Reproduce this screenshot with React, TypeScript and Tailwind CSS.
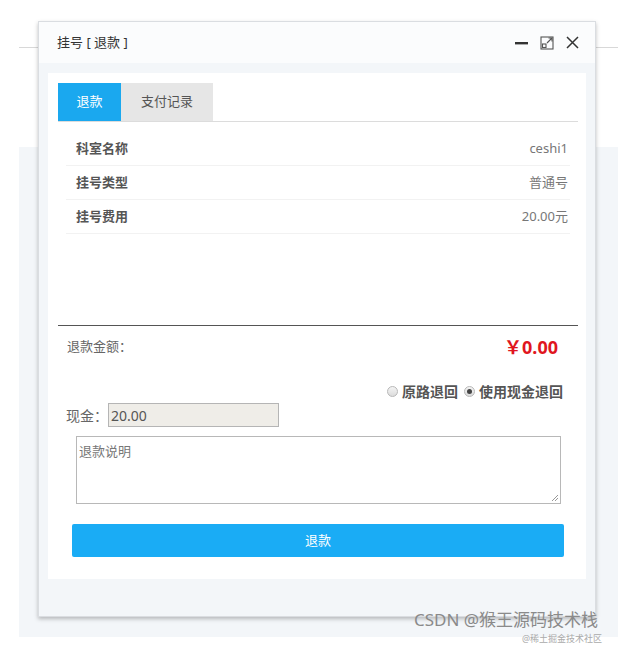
import React from "react";

const font = { fontFamily: '"Noto Sans", "Noto Sans CJK SC", sans-serif' };

const rows = [
  { label: "科室名称", value: "ceshi1" },
  { label: "挂号类型", value: "普通号" },
  { label: "挂号费用", value: "20.00元" },
];

const Radio = ({ checked }: { checked?: boolean }) => (
  <span className="inline-flex items-center justify-center w-[11px] h-[11px] rounded-full border border-[#b8b8b8] bg-gradient-to-b from-[#f4f4f4] to-[#dcdcdc]">
    {checked && <span className="w-[5px] h-[5px] rounded-full bg-[#444]" />}
  </span>
);

export default function App() {
  return (
    <div
      className="relative w-[641px] h-[645px] bg-white overflow-hidden text-[13px] text-[#555]"
      style={font}
    >
      {/* page behind the dialog */}
      <div className="pt-[47px] pl-[19px] pr-[23px]">
        <div className="border-t border-[#d8d8d8]" />
        <div className="mt-[99px] h-[490px] bg-[#f3f6f9]" />
      </div>

      {/* dialog */}
      <div className="absolute left-[38px] top-[21px] w-[558px] h-[596px] border border-[#dadde1] bg-[#f3f6f9] shadow-[0_2px_4px_rgba(0,0,0,0.25)] flex flex-col">
        <div className="h-[41px] flex items-center justify-between pl-[18px] pr-[16px] bg-[#fbfcfd] text-[13px] text-[#333]">
          <span>挂号 [ 退款 ]</span>
          <div className="flex items-center gap-[12px] text-[#333]">
            <svg width="13" height="14" viewBox="0 0 13 14">
              <rect x="0" y="6" width="13" height="2.4" fill="#333" />
            </svg>
            <svg width="14" height="14" viewBox="0 0 14 14" fill="none" stroke="#555" strokeWidth="1.1">
              <rect x="1" y="1" width="12" height="12" />
              <rect x="2.5" y="8" width="3.5" height="3.5" />
              <path d="M7 7 L12 2 M8.5 2 H12 V5.5" />
            </svg>
            <svg width="13" height="13" viewBox="0 0 13 13" stroke="#333" strokeWidth="1.5">
              <path d="M1 1 L12 12 M12 1 L1 12" />
            </svg>
          </div>
        </div>

        <div className="flex-1 pt-[10px] pl-[9px] pr-[9px] pb-[37px]">
          <div className="h-full bg-white pt-[10px] pl-[10px] pr-[8px] flex flex-col">
            {/* tabs */}
            <div className="flex border-b border-[#dcdcdc] h-[39px]">
              <div className="w-[63px] bg-[#1aa8ef] text-white flex items-center justify-center">退款</div>
              <div className="w-[92px] bg-[#e6e6e6] text-[#555] flex items-center justify-center">支付记录</div>
            </div>

            {/* info rows */}
            <div className="mt-[10px] mx-[8px]">
              {rows.map((r) => (
                <div
                  key={r.label}
                  className="h-[34px] flex items-center justify-between pl-[10px] pr-[2px] border-b border-[#f2f2f2]"
                >
                  <span className="font-bold text-[#555]">{r.label}</span>
                  <span className="text-[#777]">{r.value}</span>
                </div>
              ))}
            </div>

            <div className="mt-[91px] border-t border-[#555]" />

            <div className="h-[42px] flex items-center justify-between pl-[9px] pr-[20px]">
              <span className="text-[#666]">退款金额：</span>
              <span className="text-[18px] font-bold text-[#e01520]">￥0.00</span>
            </div>

            <div className="mt-[12px] h-[22px] flex items-center justify-end pr-[15px] gap-[4px] font-bold text-[14px] text-[#555]">
              <Radio />
              <span className="mr-[2px]">原路退回</span>
              <Radio checked />
              <span>使用现金退回</span>
            </div>

            <div className="mt-[1px] flex items-center pl-[8px]">
              <span className="text-[#666] text-[14px]">现金：</span>
              <div className="w-[171px] h-[24px] border border-[#b5b5b5] bg-[#efede8] flex items-center pl-[2px] text-[14px] text-[#555]">
                20.00
              </div>
            </div>

            <div className="mt-[9px] ml-[18px] w-[485px] h-[68px] border border-[#b8b8b8] relative">
              <span className="absolute left-[2px] top-[5px] text-[#777]">退款说明</span>
              <svg className="absolute right-[1px] bottom-[1px]" width="8" height="8" viewBox="0 0 8 8" stroke="#999" strokeWidth="1">
                <path d="M1 7 L7 1 M4 7 L7 4" />
              </svg>
            </div>

            <div className="mt-[20px] ml-[14px] w-[492px] h-[33px] rounded-[2px] bg-[#1aacf5] text-white flex items-center justify-center">
              退款
            </div>
          </div>
        </div>
      </div>

      {/* watermark */}
      <div className="absolute left-[414px] top-[611px] text-[17px] text-[#8a8a8a] whitespace-nowrap leading-none">
        CSDN @猴王源码技术栈
      </div>
      <div className="absolute left-[522px] top-[634px] text-[9px] text-[#aaa] whitespace-nowrap leading-none">
        @稀土掘金技术社区
      </div>
    </div>
  );
}
